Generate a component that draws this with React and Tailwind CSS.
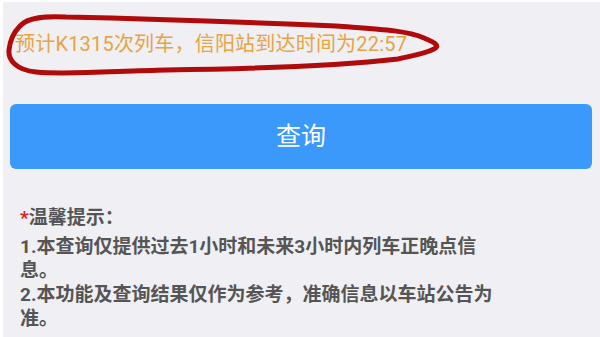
export default function App() {
  return (
    <div
      className="w-[600px] h-[337px] overflow-hidden bg-[#efeff4] border-t-2 border-l-[3px] border-white"
      style={{ fontFamily: 'Roboto, "Noto Sans CJK SC", sans-serif' }}
    >
      {/* Result line with hand-drawn mark */}
      <div className="relative h-[86px] pt-[28px] pl-[12px]">
        <p className="text-[20px] leading-[28px] tracking-[0.2px] text-[#e6a442]">
          预计K1315次列车，信阳站到达时间为22:57
        </p>
        <svg
          className="absolute left-0 top-0 pointer-events-none"
          width="440"
          height="86"
          viewBox="-3 -2 440 86"
          fill="none"
        >
          <path
            d="M14 22 C 22 13, 40 12, 60 13 C 150 15, 260 19, 330 22 C 370 25, 400 26, 418 34 C 430 39, 434 42, 428 45 C 418 50, 405 52, 392 55 C 320 63, 240 65, 160 66 C 110 67, 60 71, 30 68 C 10 66, 2 56, 3 46 C 4 36, 8 28, 14 22 Z"
            stroke="#b00a0a"
            strokeWidth="5"
            strokeLinejoin="round"
          />
        </svg>
      </div>

      {/* Query button */}
      <div className="pl-[7px] pr-[8px] pt-[16px]">
        <button className="w-full h-[65px] rounded-[6px] bg-[#3b99fb] text-white text-[25px] leading-none flex items-center justify-center">
          查询
        </button>
      </div>

      {/* Tips */}
      <div className="pl-[17px] pt-[37px] text-[#555555] text-[19px] leading-[24px] font-bold">
        <p>
          <span className="text-[#e0201c]">*</span>温馨提示：
        </p>
        <p className="mt-[5px]">1.本查询仅提供过去1小时和未来3小时内列车正晚点信</p>
        <p>息。</p>
        <p>2.本功能及查询结果仅作为参考，准确信息以车站公告为</p>
        <p>准。</p>
      </div>
    </div>
  );
}
